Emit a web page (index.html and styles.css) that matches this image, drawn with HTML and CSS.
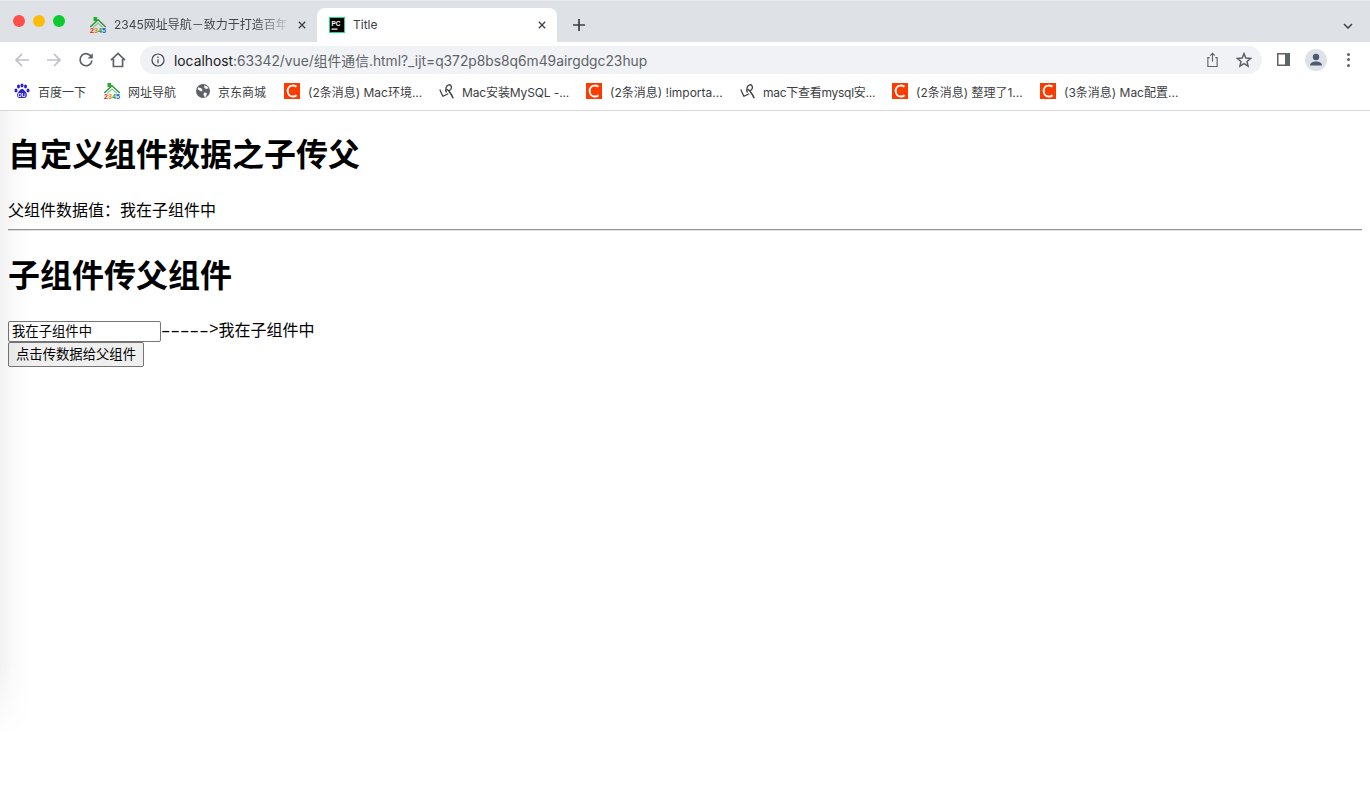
FILE: index.html
```html
<!DOCTYPE html>
<html lang="zh">
<head>
<meta charset="utf-8">
<title>Title</title>
<link rel="stylesheet" href="styles.css">
</head>
<body>
<svg class="defs" width="0" height="0" aria-hidden="true">
  <symbol id="ihouse" viewBox="0 0 16 16">
    <path d="M.3 10 8 2.800 15.700 10" fill="none" stroke="#35923f" stroke-width="1.400"/>
    <path d="M3.300 10.500 8 6l4.700 4.500" fill="none" stroke="#86c48b" stroke-width="1.100"/>
    <rect x="3.500" y="0" width="3.600" height="4" fill="#1fb02a"/>
  </symbol>
  <symbol id="icsdn" viewBox="0 0 16 16">
    <rect width="16" height="16" fill="#fc3b00"/>
    <path d="M12.500 3.800A5 5 0 0 0 8.500 2.500C5.800 2.500 3.700 5 3.700 8s2.100 5.500 4.800 5.500a5 5 0 0 0 4-1.300" fill="none" stroke="#fff" stroke-width="2"/>
  </symbol>
  <symbol id="imysql" viewBox="0 0 16 16">
    <path d="M.8 6.500c1 2.500 1.800 4.700 3.200 6.800l5.200-2.500" fill="none" stroke="#3d3d3d" stroke-width="1.200"/>
    <path d="M7.500 9.500C6 7 7 2.200 9.800 1.800c2.500-.3 3.300 2.500 2 4.500-1.200 1.700-3.300 1.500-4-.3" fill="none" stroke="#3d3d3d" stroke-width="1.300"/>
    <path d="M9.500 7.500c1.500 2 3.500 4.500 4.700 7.800" fill="none" stroke="#3d3d3d" stroke-width="1.400"/>
  </symbol>
</svg>

<header class="browser">
  <div class="tabstrip">
    <div class="lights">
      <span class="light red"></span>
      <span class="light yellow"></span>
      <span class="light green"></span>
    </div>
    <div class="tab">
      <svg class="favicon" viewBox="0 0 16 16"><use href="#ihouse"/><text y="16" class="digits"><tspan x="0" fill="#e0141c">2</tspan><tspan x="4" fill="#e08a00">3</tspan><tspan x="8" fill="#14a03c">4</tspan><tspan x="12" fill="#1a5fd8">5</tspan></text></svg>
      <span class="tab-title fade">2345网址导航－致力于打造百年</span>
      <svg class="tab-close" viewBox="0 0 10 10"><path d="M1 1l8 8M9 1l-8 8"/></svg>
    </div>
    <div class="tab active">
      <svg class="favicon" viewBox="0 0 16 16">
        <rect width="16" height="16" fill="#21d789"/>
        <rect x="1" y="1" width="14" height="14" fill="#000"/>
        <rect x="2.500" y="11.500" width="6" height="1.200" fill="#fff"/>
        <text x="2.500" y="8.500" class="pc">PC</text>
      </svg>
      <span class="tab-title">Title</span>
      <svg class="tab-close" viewBox="0 0 10 10"><path d="M1 1l8 8M9 1l-8 8"/></svg>
    </div>
    <svg class="newtab" viewBox="0 0 12 12"><path d="M6 0v12M0 6h12"/></svg>
    <svg class="tabsearch" viewBox="0 0 10 6"><path d="M1 1l4 4 4-4"/></svg>
  </div>

  <div class="toolbar">
    <svg class="nav-icon" viewBox="0 0 16 16"><path class="dim" d="M15 8H2M8 2 2 8l6 6"/></svg>
    <svg class="nav-icon" viewBox="0 0 16 16"><path class="dim" d="M1 8h13M8 2l6 6-6 6"/></svg>
    <svg class="nav-icon" viewBox="0 0 16 16"><path class="ink" d="M13.500 5.200A6 6 0 1 0 14 8.500"/><path class="ink-fill" d="M14.800 1.300v5.200H9.600z"/></svg>
    <svg class="nav-icon" viewBox="0 0 16 16"><path class="ink" d="M1 8.200 8 1.500l7 6.700M3.400 7v7.500h9.200V7"/></svg>
    <div class="omnibox">
      <svg class="info" viewBox="0 0 14 14"><circle cx="7" cy="7" r="6"/><path d="M7 6.200v4M7 3.600v1.400"/></svg>
      <span class="url"><b>localhost</b>:63342/vue/组件通信.html?_ijt=q372p8bs8q6m49airgdgc23hup</span>
      <svg class="share" viewBox="0 0 14 16"><path d="M4 5.500H2v9.500h10V5.500h-2M7 10V1M4.500 3.200 7 .8l2.500 2.400"/></svg>
      <svg class="star" viewBox="0 0 16 16"><path d="M8 1.600 9.800 6l4.800.4-3.600 3.100 1.100 4.700L8 11.700l-4.100 2.500L5 9.500 1.400 6.400 6.200 6z"/></svg>
    </div>
    <svg class="sidepanel" viewBox="0 0 13 13"><path fill-rule="evenodd" d="M0 0h13v13H0zM1.500 1.500v10h6.500v-10z"/></svg>
    <span class="avatar"><svg viewBox="0 0 20 20"><circle cx="10" cy="7" r="3.200"/><path d="M4 15.500c0-2.800 3-4 6-4s6 1.200 6 4z"/></svg></span>
    <span class="menu"><i></i><i></i><i></i></span>
  </div>

  <nav class="bookmarks">
    <a class="bm bm-1"><svg class="bm-icon" viewBox="0 0 16 16">
      <g fill="#2a1fdc"><ellipse cx="4.500" cy="3.500" rx="1.500" ry="2"/><ellipse cx="8" cy="2.500" rx="1.500" ry="2"/><ellipse cx="11.500" cy="3.500" rx="1.500" ry="2"/><ellipse cx="2" cy="7.500" rx="1.500" ry="2"/><ellipse cx="14" cy="7.500" rx="1.500" ry="2"/><path d="M8 6c-2 0-2.500 2-4 3.500C2.500 11 3 15 5.500 15h5c2.500 0 3-4 1.500-5.500C10.500 8 10 6 8 6z"/></g>
      <path d="M4.500 10.500h2.500v3H4.500zM8.500 10v3.500h2.500v-3" fill="none" stroke="#fff" stroke-width=".8"/>
    </svg><span>百度一下</span></a>
    <a class="bm bm-2"><svg class="bm-icon" viewBox="0 0 16 16"><use href="#ihouse"/><text y="16" class="digits"><tspan x="0" fill="#e0141c">2</tspan><tspan x="4" fill="#e08a00">3</tspan><tspan x="8" fill="#14a03c">4</tspan><tspan x="12" fill="#1a5fd8">5</tspan></text></svg><span>网址导航</span></a>
    <a class="bm bm-3"><svg class="bm-icon" viewBox="0 0 16 16">
      <circle cx="8" cy="8" r="7" fill="#5f6368"/>
      <path d="M3 4.500l3 .5 1.500 2-1 1.500-2-1-1.800-1.200zM9 9.500l3 .5-1 3.500-1.500.5-1-2.500zM9 2.500l3 .8 1.500 2L11 6 9.500 5z" fill="#fff"/>
    </svg><span>京东商城</span></a>
    <a class="bm bm-4"><svg class="bm-icon"><use href="#icsdn"/></svg><span>(2条消息) Mac环境...</span></a>
    <a class="bm bm-5"><svg class="bm-icon"><use href="#imysql"/></svg><span>Mac安装MySQL -...</span></a>
    <a class="bm bm-6"><svg class="bm-icon"><use href="#icsdn"/></svg><span>(2条消息) !importa...</span></a>
    <a class="bm bm-7"><svg class="bm-icon"><use href="#imysql"/></svg><span>mac下查看mysql安...</span></a>
    <a class="bm bm-8"><svg class="bm-icon"><use href="#icsdn"/></svg><span>(2条消息) 整理了1...</span></a>
    <a class="bm bm-9"><svg class="bm-icon"><use href="#icsdn"/></svg><span>(3条消息) Mac配置...</span></a>
  </nav>
</header>

<main class="page">
  <div class="edge-shadow"></div>
  <h1 class="heading first">自定义组件数据之子传父</h1>
  <p class="value">父组件数据值：我在子组件中</p>
  <hr class="rule">
  <h1 class="heading">子组件传父组件</h1>
  <div class="line">
    <input class="field" type="text" value="我在子组件中"><span class="dashes">-----</span><span class="arrow">&gt;</span><span class="echo">我在子组件中</span>
  </div>
  <button class="send" type="button">点击传数据给父组件</button>
</main>
</body>
</html>
```
FILE: styles.css
```css
* { box-sizing: border-box; }
html, body { margin: 0; height: 100%; }
body {
  background: #fff;
  color: #000;
  font-family: "Liberation Sans", "Noto Sans CJK SC", sans-serif;
  overflow: hidden;
}
.defs { position: absolute; }

/* browser chrome */
.browser { font-family: Inter, "Noto Sans CJK SC", sans-serif; }
.tabstrip {
  height: 42px;
  background: #dee1e6;
  display: flex;
  align-items: flex-end;
  position: relative;
  border-top: 1px solid #e8eaee;
}
.lights { display: flex; gap: 8px; padding: 0 0 0 13px; width: 79px; align-self: flex-start; margin-top: 14px; }
.light { width: 12px; height: 12px; border-radius: 50%; }
.red { background: #ff4f4b; }
.yellow { background: #ffbb0a; }
.green { background: #0ccb2c; }

.tab {
  width: 238px;
  height: 34px;
  display: flex;
  align-items: center;
  padding: 0 8px 0 11px;
  color: #45474a;
  font-size: 12px;
  position: relative;
}
.tab.active {
  width: 240px;
  background: #fff;
  border-radius: 8px 8px 0 0;
  color: #3c4043;
  padding-left: 12px;
}
.favicon { width: 16px; height: 16px; flex: none; overflow: visible; }
.digits { font: 700 7.200px "Liberation Sans", sans-serif; }
.pc { font: 700 6.500px "Liberation Sans", sans-serif; fill: #fff; }
.tab-title { margin: -1px 0 0 8px; flex: 1; white-space: nowrap; line-height: 16px; min-width: 0; }
.fade {
  flex: none;
  width: 178px;
  -webkit-mask-image: linear-gradient(90deg, #000 80%, transparent 100%);
  mask-image: linear-gradient(90deg, #000 80%, transparent 100%);
}
.fade + .tab-close { margin-left: 6px; }
.tab-close { width: 8px; height: 8px; flex: none; margin: 0 3px 0 9px; }
.tab-close path { fill: none; stroke: #3c4043; stroke-width: 1.600; }
.newtab { width: 12px; height: 12px; margin: 0 0 11px 16px; }
.newtab path { fill: none; stroke: #3c4043; stroke-width: 1.700; }
.tabsearch { width: 10px; height: 6px; margin: 0 17px 13px auto; }
.tabsearch path { fill: none; stroke: #3c4043; stroke-width: 1.500; }

.toolbar {
  height: 35px;
  display: flex;
  align-items: center;
  padding-left: 14px;
  background: #fff;
}
.nav-icon { width: 16px; height: 16px; flex: none; margin-right: 16px; }
.dim { fill: none; stroke: #bdc0c4; stroke-width: 1.700; }
.ink { fill: none; stroke: #5f6368; stroke-width: 1.700; }
.ink-fill { fill: #5f6368; }
.omnibox {
  width: 1122px;
  height: 28px;
  margin-left: -2px;
  border-radius: 14px;
  background: #f0f2f5;
  display: flex;
  align-items: center;
  padding-left: 11px;
  font-size: 13.800px;
  color: #5f6368;
}
.info { width: 14px; height: 14px; flex: none; }
.info circle, .info path { fill: none; stroke: #45474a; stroke-width: 1.200; }
.url { margin-left: 9px; white-space: nowrap; flex: 1; }
.url b { font-weight: 400; color: #202124; }
.share { width: 13px; height: 16px; flex: none; margin-right: 17px; }
.share path { fill: none; stroke: #5f6368; stroke-width: 1.200; }
.star { width: 16px; height: 16px; flex: none; margin-right: 10px; }
.star path { fill: none; stroke: #5f6368; stroke-width: 1.500; }
.sidepanel { width: 13px; height: 13px; flex: none; margin-left: 15px; fill: #5f6368; }
.avatar {
  width: 22px; height: 22px; border-radius: 50%;
  background: #dee1e6; margin-left: 15px; flex: none;
  display: flex; align-items: center; justify-content: center;
}
.avatar svg { width: 20px; height: 20px; fill: #4d5a75; }
.menu { display: flex; flex-direction: column; gap: 2.500px; margin-left: 20px; }
.menu i { width: 3px; height: 3px; border-radius: 50%; background: #5f6368; }

.bookmarks {
  height: 34px;
  padding-bottom: 5px;
  border-bottom: 1px solid #d6d7d9;
  display: flex;
  align-items: center;
  font-size: 12px;
  color: #3c4043;
  white-space: nowrap;
}
.bm { display: flex; align-items: center; }
.bm span { margin-left: 8px; }
.bm-icon { width: 16px; height: 16px; flex: none; overflow: visible; }
.bm-1 { margin-left: 14px; width: 90px; }
.bm-2 { width: 91px; }
.bm-3 { width: 89px; }
.bm-3 span { margin-left: 7px; }
.bm-4 { width: 155px; }
.bm-5 { width: 147px; }
.bm-5 span { margin-left: 7px; letter-spacing: -.12px; }
.bm-6 { width: 154px; }
.bm-7 { width: 152px; }
.bm-7 span { margin-left: 7px; letter-spacing: -.27px; }
.bm-8 { width: 148px; }

/* page */
.page { padding: 1px 8px 0; position: relative; height: 696px; }
.edge-shadow {
  position: absolute;
  left: 0; top: 0;
  width: 32px;
  height: 625px;
  background: linear-gradient(90deg, rgba(0,0,0,.055), rgba(0,0,0,.02) 45%, rgba(0,0,0,0));
  -webkit-mask-image: linear-gradient(180deg, #000 88%, transparent);
  mask-image: linear-gradient(180deg, #000 88%, transparent);
  pointer-events: none;
}
.heading { font-size: 32px; font-weight: 700; line-height: 40px; margin: 25px 0 25px; position: relative; }
.heading.first { margin-top: 23px; margin-bottom: 24px; }
.value { font-size: 16px; line-height: 24px; margin: 0; }
.rule { border: 0; border-top: 1px solid #969696; border-bottom: 1px solid #e0e0e0; margin: 6px 0 0; height: 2px; }
.line { font-size: 16px; line-height: 19px; display: flex; align-items: flex-start; height: 21px; }
.dashes {
  display: inline-block;
  width: 48px;
  transform: scaleX(1.79);
  transform-origin: left center;
}
.arrow { font-family: "Liberation Mono", monospace; }
.field {
  width: 153px; height: 21px; padding: 0 3px 2px;
  font: 13.333px "Liberation Sans", "Noto Sans CJK SC", sans-serif;
  border: 1px solid #767676; border-radius: 2px; background: #fff; color: #000; margin: 0;
}
.send {
  display: block; width: 136px; height: 25px; padding: 0 0 2px;
  font: 13.333px "Liberation Sans", "Noto Sans CJK SC", sans-serif;
  border: 1px solid #767676; border-radius: 2px; background: #efefef; color: #000; margin: 0;
}
```
